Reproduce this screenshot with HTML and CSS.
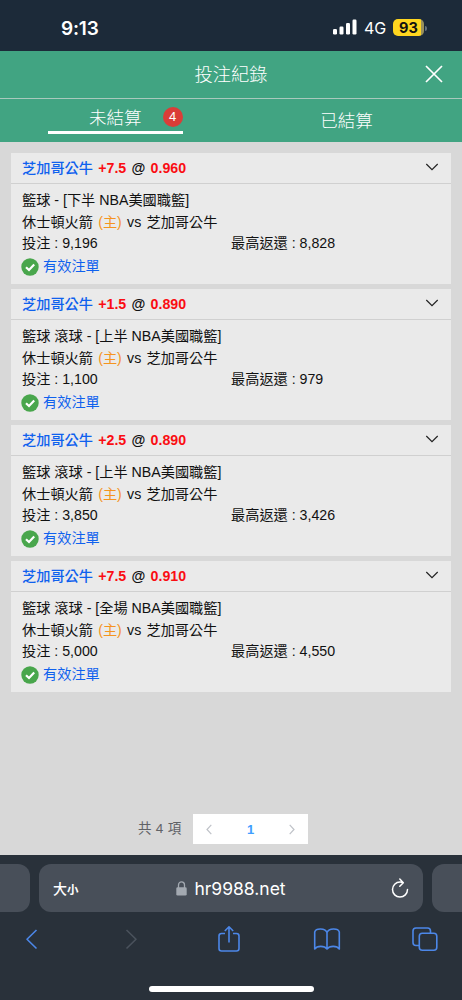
FILE: index.html
```html
<!DOCTYPE html>
<html lang="zh-Hant">
<head>
<meta charset="utf-8">
<title>投注紀錄</title>
<link rel="stylesheet" href="styles.css">
</head>
<body>
<div class="status">
  <span class="time">9:13</span>
  <svg class="signal" width="24" height="16" viewBox="0 0 24 16"><g fill="#fff"><rect x="0" y="10" width="4" height="5.5" rx="1.2"/><rect x="6.5" y="7.5" width="4" height="8" rx="1.2"/><rect x="13" y="4" width="4" height="11.5" rx="1.2"/><rect x="19.5" y="0.500" width="4" height="15" rx="1.2"/></g></svg>
  <span class="net">4G</span>
  <span class="battery">93</span><i class="nub"></i>
</div>
<header class="title"><h1>投注紀錄</h1>
  <svg class="close" width="18" height="18" viewBox="0 0 18 18"><path d="M1 1L17 17M17 1L1 17" stroke="#fff" stroke-width="1.7" fill="none"/></svg>
</header>
<nav class="tabs">
  <div class="tab"><div class="active"><span>未結算</span><b class="count">4</b></div></div>
  <div class="tab other">已結算</div>
</nav>
<main class="list">
  <article class="card">
    <div class="head"><p><span class="team">芝加哥公牛</span> <span class="odds">+7.5</span> @ <span class="odds">0.960</span></p><svg class="chev" width="14" height="8" viewBox="0 0 14 8"><path d="M1.300 1L7 6.600L12.700 1"/></svg></div>
    <div class="body"><p>籃球 - [下半 NBA美國職籃]</p><p class="match">休士頓火箭 <em>(主)</em> vs 芝加哥公牛</p><p class="money"><span>投注 : 9,196</span><span>最高返還 : 8,828</span></p><p class="valid"><svg width="18" height="18" viewBox="0 0 18 18"><circle cx="9" cy="9" r="8.700"/><path d="M5 9.200L8 12L13.200 6.600"/></svg>有效注單</p></div>
  </article>
  <article class="card">
    <div class="head"><p><span class="team">芝加哥公牛</span> <span class="odds">+1.5</span> @ <span class="odds">0.890</span></p><svg class="chev" width="14" height="8" viewBox="0 0 14 8"><path d="M1.300 1L7 6.600L12.700 1"/></svg></div>
    <div class="body"><p>籃球 滾球 - [上半 NBA美國職籃]</p><p class="match">休士頓火箭 <em>(主)</em> vs 芝加哥公牛</p><p class="money"><span>投注 : 1,100</span><span>最高返還 : 979</span></p><p class="valid"><svg width="18" height="18" viewBox="0 0 18 18"><circle cx="9" cy="9" r="8.700"/><path d="M5 9.200L8 12L13.200 6.600"/></svg>有效注單</p></div>
  </article>
  <article class="card">
    <div class="head"><p><span class="team">芝加哥公牛</span> <span class="odds">+2.5</span> @ <span class="odds">0.890</span></p><svg class="chev" width="14" height="8" viewBox="0 0 14 8"><path d="M1.300 1L7 6.600L12.700 1"/></svg></div>
    <div class="body"><p>籃球 滾球 - [上半 NBA美國職籃]</p><p class="match">休士頓火箭 <em>(主)</em> vs 芝加哥公牛</p><p class="money"><span>投注 : 3,850</span><span>最高返還 : 3,426</span></p><p class="valid"><svg width="18" height="18" viewBox="0 0 18 18"><circle cx="9" cy="9" r="8.700"/><path d="M5 9.200L8 12L13.200 6.600"/></svg>有效注單</p></div>
  </article>
  <article class="card">
    <div class="head"><p><span class="team">芝加哥公牛</span> <span class="odds">+7.5</span> @ <span class="odds">0.910</span></p><svg class="chev" width="14" height="8" viewBox="0 0 14 8"><path d="M1.300 1L7 6.600L12.700 1"/></svg></div>
    <div class="body"><p>籃球 滾球 - [全場 NBA美國職籃]</p><p class="match">休士頓火箭 <em>(主)</em> vs 芝加哥公牛</p><p class="money"><span>投注 : 5,000</span><span>最高返還 : 4,550</span></p><p class="valid"><svg width="18" height="18" viewBox="0 0 18 18"><circle cx="9" cy="9" r="8.700"/><path d="M5 9.200L8 12L13.200 6.600"/></svg>有效注單</p></div>
  </article>
</main>
<div class="pager"><span class="total">共 4 項</span>
  <div class="pages"><svg width="6" height="11" viewBox="0 0 6 11"><path d="M5.300 0.800L1 5.500L5.300 10.200"/></svg><b>1</b><svg width="6" height="11" viewBox="0 0 6 11"><path d="M0.700 0.800L5 5.500L0.700 10.200"/></svg></div>
</div>
<footer class="browser">
  <div class="bars">
    <div class="side left"></div>
    <div class="address"><span class="size">大<small>小</small></span>
      <span class="url"><svg width="11" height="15" viewBox="0 0 11 15"><rect x="0.300" y="6.300" width="10.400" height="8.300" rx="1.400" fill="#a3a9b1"/><path d="M2.500 7V4C2.500 -0.100 8.500 -0.100 8.500 4V7" fill="none" stroke="#a3a9b1" stroke-width="1.300"/></svg>hr9988.net</span>
      <svg class="reload" width="18" height="21" viewBox="0 0 18 21"><path d="M12 4.600C10.800 4.200 9.900 4.100 9 4.100A7.500 7.500 0 1 0 16.500 11.600M8.800 1L12.300 4.700L8.800 8.300" fill="none" stroke="#fff" stroke-width="1.500" stroke-linecap="round" stroke-linejoin="round"/></svg>
    </div>
    <div class="side right"></div>
  </div>
  <div class="tools">
    <svg width="13" height="28" viewBox="0 0 13 28"><path d="M11.500 5L2 14.200L11.500 23.500"/></svg>
    <svg class="off" width="13" height="28" viewBox="0 0 13 28"><path d="M1.500 5L11 14.200L1.500 23.500"/></svg>
    <svg width="22" height="28" viewBox="0 0 22 28"><path d="M7 8.500H3.500Q1 8.500 1 11V23.500Q1 26 3.500 26H18.500Q21 26 21 23.500V11Q21 8.500 18.500 8.500H15M11 17.500V1.800M6.800 6L11 1.800L15.200 6"/></svg>
    <svg width="28" height="28" viewBox="0 0 28 28"><path d="M14 7.500C12 3 3 3 1.700 7V24C4 20.500 11.500 20.500 14 24C16.500 20.500 24 20.500 26.300 24V7C25 3 16 3 14 7.500V24"/></svg>
    <svg width="26" height="28" viewBox="0 0 26 28"><rect x="7.300" y="8.300" width="17.500" height="17" rx="3"/><path d="M7 20.500H4Q1 20.500 1 17.500V6Q1 3 4 3H15.500Q18.500 3 18.500 6V8"/></svg>
  </div>
  <div class="home"></div>
</footer>
</body>
</html>
```
FILE: styles.css
```css
* { box-sizing: border-box; margin: 0; padding: 0; }
body {
  width: 462px; height: 1000px; overflow: hidden;
  display: flex; flex-direction: column;
  background: #d8d8d8; color: #111;
  font-family: "Liberation Sans", "Noto Sans CJK TC", sans-serif;
  font-size: 14.2px;
}
svg { display: block; flex: none; }
.status {
  height: 51px; flex: none; background: #1c2a39; color: #fff;
  display: flex; align-items: center; padding: 5px 0 0 61px;
  font-family: Inter, sans-serif;
}
.time { font-size: 19px; font-weight: 600; width: 272px; letter-spacing: -0.2px; }
.signal { margin-top: -2px; }
.net { font-size: 16px; margin-left: 7px; width: 22px; }
.battery {
  margin: -1px 0 0 7px; width: 31px; height: 17px; border-radius: 5px;
  background: linear-gradient(90deg, #ffd61f 91%, #99905c 91%);
  color: #111; font-weight: 700; font-size: 14.5px; line-height: 17px; text-align: center;
}
.nub { width: 2px; height: 5px; margin-left: 1px; background: #65717c; border-radius: 0 2px 2px 0; }
.title {
  height: 48px; flex: none; background: #41a482; border-bottom: 1px solid #a9c9bd;
  display: grid; grid-template-columns: 46px 1fr 46px; align-items: center; color: #fff;
}
h1 { grid-column: 2; text-align: center; font-size: 18.3px; font-weight: 300; line-height: 26px; }
.close { margin: -2px 0 0 9px; }
.tabs { height: 43px; flex: none; display: grid; grid-template-columns: 1fr 1fr; background: #41a482; color: #fff; font-size: 17.5px; font-weight: 300; }
.tab { display: flex; justify-content: center; }
.active { width: 135px; height: 35px; border-bottom: 3px solid #fff; display: flex; align-items: center; padding: 3px 0 0 41px; }
.count { width: 20px; height: 20px; margin: 1px 0 0 21px; border-radius: 50%; background: #da3d38; text-align: center; font: 13px/20px "Liberation Sans", sans-serif; }
.other { align-items: center; padding-bottom: 2px; }
.list { padding: 11px 11px 0; display: flex; flex-direction: column; gap: 5px; }
.card { height: 131px; background: #eaeaea; }
.head { height: 31px; border-bottom: 1px solid #d0d0d0; padding: 0 12px 2px 11px; display: flex; align-items: center; justify-content: space-between; font-weight: 700; word-spacing: 1.3px; }
.team { color: #0f61ee; font-weight: 500; }
.odds { color: #fa0d12; }
.chev { margin-top: -1px; }
.chev path { fill: none; stroke: #222; stroke-width: 1.2; }
.body { padding: 6px 11px; line-height: 21.7px; }
.body p { height: 21.7px; white-space: nowrap; }
.match { word-spacing: 1.3px; }
em { color: #f5941f; font-style: normal; }
.money { display: grid; grid-template-columns: 209px 1fr; }
.valid { display: flex; align-items: center; gap: 4px; color: #0f61ee; padding-top: 2px; }
.valid svg { margin-left: -1px; }
.valid circle { fill: #49a64c; }
.valid path { fill: none; stroke: #fff; stroke-width: 2.2; }
.pager { margin-top: auto; flex: none; height: 41px; display: flex; align-items: flex-start; padding-left: 138px; }
.total { width: 55px; line-height: 30px; color: #606266; font-size: 13.5px; letter-spacing: 0.3px; }
.pages { width: 115px; height: 30px; background: #fff; display: flex; align-items: center; justify-content: space-between; padding: 0 13px; color: #409eff; font-size: 13px; }
.pages path { fill: none; stroke: #bfc2c8; stroke-width: 1.2; }
.browser { height: 145px; flex: none; background: #29313a; padding-top: 9px; }
.bars { display: flex; height: 48px; gap: 9px; }
.side { background: #484f59; width: 30px; }
.left { border-radius: 0 12px 12px 0; }
.right { border-radius: 12px 0 0 12px; }
.address { width: 384px; background: #484f59; border-radius: 12px; color: #fff; display: grid; grid-template-columns: 100px 1fr 100px; align-items: center; padding: 0 14px; }
.size { font-size: 14px; font-weight: 500; }
.size small { font-size: 11.5px; font-weight: 700; }
.url { display: flex; align-items: center; justify-content: center; gap: 7px; font: 17.5px Inter, sans-serif; }
.reload { justify-self: end; }
.tools { height: 28px; margin-top: 13px; display: grid; grid-template-columns: 62px 139px 56px 140px 56px; justify-items: center; }
.tools path, .tools rect { fill: none; stroke: #4c87e8; stroke-width: 1.6; stroke-linejoin: round; }
.tools .off path { stroke: #4a525c; }
.home { width: 165px; height: 6px; margin: 33px auto 0; border-radius: 3px; background: #fff; }
```
